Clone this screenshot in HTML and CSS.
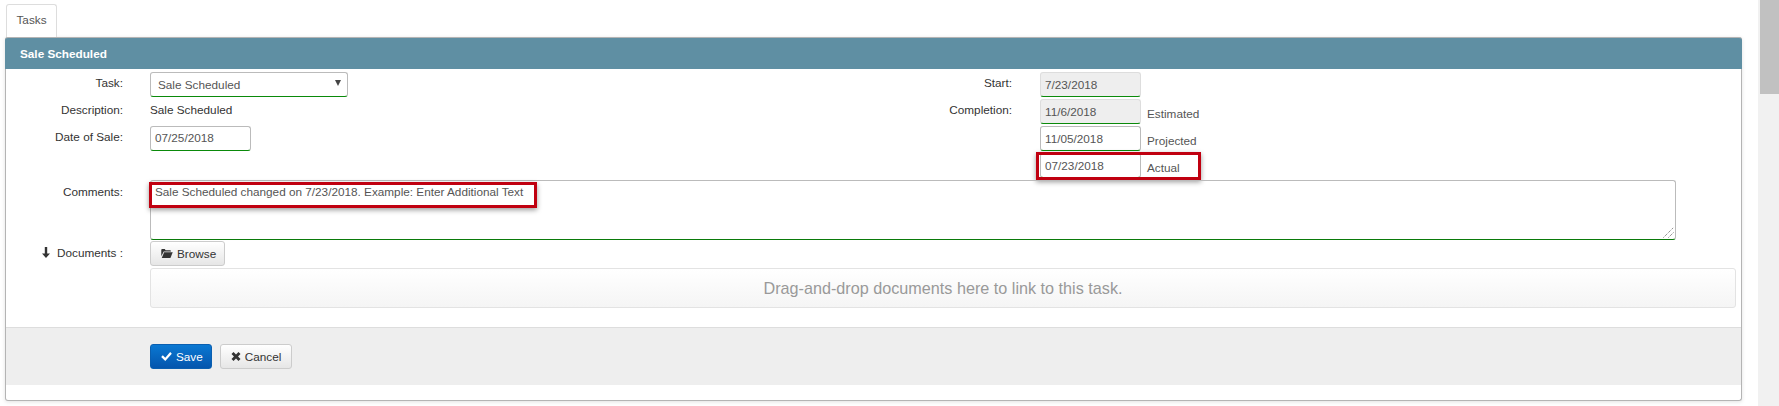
FILE: index.html
```html
<!DOCTYPE html>
<html lang="en">
<head>
  <meta charset="UTF-8">
  <title>Tasks</title>
  <link rel="stylesheet" href="styles.css">
</head>
<body>

  <div class="page">
    <div class="tabs">
      <a class="tab">Tasks</a>
    </div>

    <div class="panel">
      <div class="panel-title">Sale Scheduled</div>

      <div class="panel-body">
        <div class="top-fields">
          <div class="field-col">
            <div class="row">
              <label class="field-label">Task:</label>
              <div class="select-box">
                <span>Sale Scheduled</span>
                <span class="caret"></span>
              </div>
            </div>
            <div class="row">
              <label class="field-label">Description:</label>
              <span class="plain-value">Sale Scheduled</span>
            </div>
            <div class="row">
              <label class="field-label">Date of Sale:</label>
              <div class="text-input date">07/25/2018</div>
            </div>
          </div>

          <div class="field-col right-col">
            <div class="row">
              <label class="field-label">Start:</label>
              <div class="text-input date readonly">7/23/2018</div>
            </div>
            <div class="row">
              <label class="field-label">Completion:</label>
              <div class="text-input date readonly">11/6/2018</div>
              <span class="suffix">Estimated</span>
            </div>
            <div class="row">
              <label class="field-label"></label>
              <div class="text-input date">11/05/2018</div>
              <span class="suffix">Projected</span>
            </div>
            <div class="row">
              <label class="field-label"></label>
              <div class="text-input date">07/23/2018</div>
              <span class="suffix">Actual</span>
              <div class="callout callout-actual"></div>
            </div>
          </div>
        </div>

        <div class="row comments-row">
          <label class="field-label">Comments:</label>
          <div class="textarea-box">
            Sale Scheduled changed on 7/23/2018. Example: Enter Additional Text
            <div class="callout callout-comments"></div>
            <svg class="grip" width="11" height="11" viewBox="0 0 11 11">
              <path d="M0.500 10.500 L10.500 0.500 M5.500 10.500 L10.500 5.500" stroke="#666" stroke-width="1" stroke-dasharray="1 1" fill="none"/>
            </svg>
          </div>
        </div>

        <div class="row docs-row">
          <label class="field-label">
            <svg class="arrow" width="8" height="11" viewBox="0 0 8 11">
              <path d="M2.800 0h2.400v6.500H8L4 11 0 6.500h2.800z" fill="#333"/>
            </svg>
            Documents :
          </label>
          <div class="docs-main">
            <button class="btn">
              <svg width="12" height="9" viewBox="0 0 14 11">
                <path d="M0 1.500C0 .700 .500 0 1.300 0h3l1 1.500h5.500c.6 0 1 .4 1 1V3H3L0 9z" fill="#333"/>
                <path d="M3.500 4H14l-2.800 7H.6z" fill="#333"/>
              </svg>
              Browse
            </button>
            <div class="dropzone">Drag-and-drop documents here to link to this task.</div>
          </div>
        </div>
      </div>

      <div class="panel-footer">
        <button class="btn btn-primary">
          <svg width="11" height="9" viewBox="0 0 13 11">
            <path d="M0 6l2-2 3 3 6-7 2 2-8 9z" fill="#fff"/>
          </svg>
          Save
        </button>
        <button class="btn btn-cancel">
          <svg width="10" height="9" viewBox="0 0 11 11">
            <path d="M2.500 0L5.500 3l3-3L11 2.500l-3 3 3 3L8.500 11l-3-3-3 3L0 8.500l3-3-3-3z" fill="#333"/>
          </svg>
          Cancel
        </button>
      </div>
    </div>
  </div>

  <div class="scrollbar">
    <div class="scroll-thumb"></div>
  </div>

</body>
</html>
```

FILE: styles.css
```css
body {
  margin: 0;
  height: 406px;
  overflow: hidden;
  display: flex;
  background: #fff;
  color: #333;
  font-family: "Liberation Sans", Arial, sans-serif;
  font-size: 11.75px;
}

.page {
  width: 1758px;
  padding: 4px 0 0 5px;
  box-sizing: border-box;
}

.tabs {
  display: flex;
  height: 33px;
  padding-left: 1px;
}

.tab {
  width: 51px;
  height: 33px;
  box-sizing: border-box;
  padding-top: 8px;
  text-align: center;
  color: #555;
  background: #fff;
  border: 1px solid #ddd;
  border-bottom: none;
  border-radius: 3px 3px 0 0;
}

.panel {
  width: 1737px;
  box-sizing: border-box;
  padding-bottom: 15px;
  border: 1px solid #b4b4b4;
  border-top: none;
  border-radius: 3px;
  box-shadow: 0 1px 4px rgba(0,0,0,0.12);
}

.panel-title {
  height: 32px;
  margin: 0 -1px;
  padding: 0 15px;
  line-height: 31px;
  background: #5f8fa3;
  color: #fff;
  font-weight: bold;
  border-top: 1px solid #b4b4b4;
  border-radius: 3px 3px 0 0;
  box-sizing: border-box;
}

.panel-body {
  padding: 3px 0 19px;
  border-bottom: 1px solid #ddd;
}

.top-fields {
  display: flex;
  height: 108px;
}

.field-col {
  width: 834px;
}

.right-col {
  flex: 1;
  width: auto;
}

.row {
  display: flex;
  align-items: flex-start;
  position: relative;
  margin-bottom: 2px;
  min-height: 25px;
}

.field-label {
  width: 117px;
  margin-right: 27px;
  padding-top: 4px;
  text-align: right;
  flex: none;
}

.right-col .field-label {
  width: 172px;
  margin-right: 28px;
}

.select-box {
  width: 198px;
  height: 25px;
  box-sizing: border-box;
  padding: 0 6px 0 7px;
  display: flex;
  justify-content: space-between;
  align-items: center;
  color: #555;
  border: 1px solid #bbb;
  border-bottom: 1px solid #0a8a0a;
  border-radius: 3px;
}

.caret {
  width: 0;
  height: 0;
  margin-bottom: 3px;
  border-left: 3.5px solid transparent;
  border-right: 3.5px solid transparent;
  border-top: 6px solid #444;
}

.plain-value {
  padding-top: 4px;
}

.text-input {
  height: 25px;
  line-height: 22px;
  box-sizing: border-box;
  padding: 0 4px;
  color: #555;
  background: #fff;
  border: 1px solid #bbb;
  border-bottom: 1px solid #0a8a0a;
  border-radius: 3px;
}

.date {
  width: 101px;
}

.right-col .date {
  line-height: 23px;
}

.readonly {
  background: #eee;
  border-color: #ddd;
  border-bottom-color: #0a8a0a;
}

.suffix {
  margin-left: 6px;
  padding-top: 8px;
  color: #555;
}

.comments-row {
  height: 60px;
  margin-bottom: 1px;
}

.comments-row .field-label,
.docs-row .field-label {
  padding-top: 5px;
}

.textarea-box {
  width: 1526px;
  height: 60px;
  box-sizing: border-box;
  position: relative;
  padding: 4px;
  color: #555;
  border: 1px solid #bbb;
  border-bottom: 1px solid #0a7a0a;
  border-radius: 3px;
}

.grip {
  position: absolute;
  right: 1px;
  bottom: 1px;
}

.callout {
  position: absolute;
  box-sizing: border-box;
  border: 3px solid #c00010;
  box-shadow: 0 2px 5px rgba(0,0,0,0.4);
  pointer-events: none;
}

.callout-comments {
  left: -2px;
  top: 1px;
  width: 388px;
  height: 26px;
}

.callout-actual {
  left: 196px;
  top: -1px;
  width: 165px;
  height: 28px;
}

.docs-row {
  margin: 0;
}

.docs-main {
  flex: 1;
}

.arrow {
  margin-right: 4px;
  vertical-align: -1px;
}

.btn {
  display: inline-flex;
  align-items: center;
  gap: 4px;
  height: 25px;
  box-sizing: border-box;
  padding: 0 8px 0 10px;
  font-family: inherit;
  font-size: 11.75px;
  color: #333;
  background: linear-gradient(#fff, #e6e6e6);
  border: 1px solid #ccc;
  border-radius: 3px;
}

.btn-primary {
  color: #fff;
  background: linear-gradient(#0a78d2, #0455ad);
  border-color: #0a5fb0;
}

.btn-cancel {
  padding-right: 10px;
}

.dropzone {
  width: 1586px;
  height: 40px;
  margin-top: 2px;
  box-sizing: border-box;
  line-height: 38px;
  text-align: center;
  font-size: 16.2px;
  color: #999;
  background: linear-gradient(#fff, #f5f5f5);
  border: 1px solid #e3e3e3;
  border-radius: 3px;
}

.panel-footer {
  height: 57px;
  padding: 16px 0 0 144px;
  box-sizing: border-box;
  display: flex;
  gap: 8px;
  align-items: flex-start;
  background: #eee;
}

.scrollbar {
  width: 21px;
  height: 406px;
  padding-left: 2px;
  box-sizing: border-box;
  background: #f1f1f1;
}

.scroll-thumb {
  height: 94px;
  background: #c1c1c1;
}
```
